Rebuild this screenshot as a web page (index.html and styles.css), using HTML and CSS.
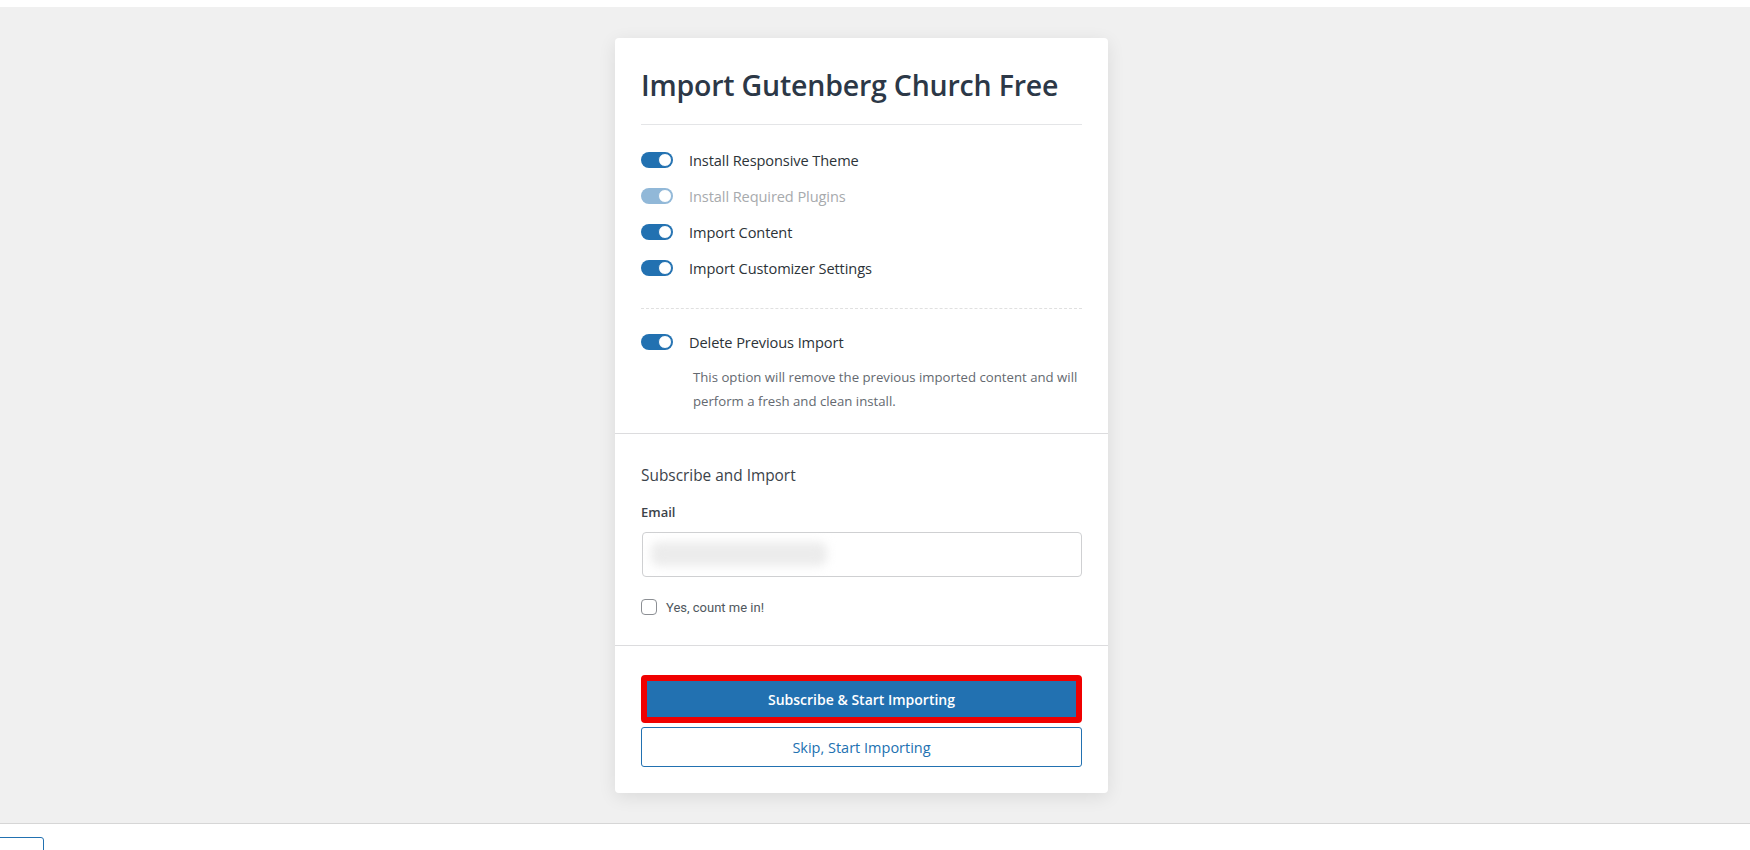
FILE: index.html
```html
<!DOCTYPE html>
<html lang="en">
<head>
<meta charset="utf-8">
<title>Import Gutenberg Church Free</title>
<link rel="stylesheet" href="styles.css">
</head>
<body>
<div class="topbar"></div>
<main class="stage">
  <div class="card">
    <section class="sec sec-options">
      <h1 class="title">Import Gutenberg Church Free</h1>
      <ul class="toggles">
        <li class="row"><span class="toggle"><span class="knob"></span></span><span class="label">Install Responsive Theme</span></li>
        <li class="row disabled"><span class="toggle"><span class="knob"></span></span><span class="label">Install Required Plugins</span></li>
        <li class="row"><span class="toggle"><span class="knob"></span></span><span class="label">Import Content</span></li>
        <li class="row"><span class="toggle"><span class="knob"></span></span><span class="label">Import Customizer Settings</span></li>
      </ul>
      <div class="dashed"></div>
      <div class="row"><span class="toggle"><span class="knob"></span></span><span class="label">Delete Previous Import</span></div>
      <p class="desc">This option will remove the previous imported content and will perform a fresh and clean install.</p>
    </section>
    <section class="sec sec-subscribe">
      <h2 class="subhead">Subscribe and Import</h2>
      <div class="field-label">Email</div>
      <div class="input"><span class="blurred"></span></div>
      <label class="check"><span class="box"></span><span class="check-text">Yes, count me in!</span></label>
    </section>
    <section class="sec sec-actions">
      <button class="btn-primary" type="button">Subscribe &amp; Start Importing</button>
      <button class="btn-secondary" type="button">Skip, Start Importing</button>
    </section>
  </div>
</main>
<footer class="footer"><span class="footer-btn"></span></footer>
</body>
</html>
```

FILE: styles.css
```css
* { box-sizing: border-box; }
html, body { margin: 0; padding: 0; }
body {
  background: #f0f0f0;
  font-family: "Open Sans", "Noto Sans", sans-serif;
  color: #2c3338;
  height: 850px;
  overflow: hidden;
}
.topbar { height: 7px; background: #ffffff; }
.stage {
  height: 816px;
  display: flex;
  justify-content: center;
  align-items: flex-start;
  padding: 31px 27px 0 0;
}
.card {
  width: 493px;
  background: #ffffff;
  border-radius: 4px;
  box-shadow: 0 4px 18px rgba(0, 0, 0, 0.09);
}
.sec { padding: 0 26px; }
.sec + .sec { border-top: 1px solid #dcdcde; }

.sec-options { padding-top: 27px; padding-bottom: 20px; }
.title {
  margin: 0;
  font-size: 28.5px;
  font-weight: 600;
  line-height: 40px;
  color: #2c3847;
  letter-spacing: -0.2px;
  padding-bottom: 19px;
  border-bottom: 1px solid #e4e5e7;
}
.toggles { list-style: none; margin: 17px 0 0; padding: 0; }
.row {
  height: 36px;
  display: flex;
  align-items: center;
}
.toggle {
  width: 32px;
  height: 16px;
  border-radius: 8px;
  background: #2271b1;
  display: flex;
  align-items: center;
  justify-content: flex-end;
  padding-right: 1px;
  flex: none;
}
.knob {
  width: 14px;
  height: 14px;
  border-radius: 50%;
  background: #ffffff;
  border: 1px solid #2271b1;
}
.label {
  margin-left: 16px;
  font-size: 14.6px;
  font-weight: 500;
  color: #2c3338;
  letter-spacing: -0.1px;
}
.row.disabled .toggle { background: #91b8d8; }
.row.disabled .knob { border-color: #91b8d8; }
.row.disabled .label { color: #a7aaad; }

.dashed {
  margin: 22px 0 15px;
  border-top: 1px dashed #e0e0e0;
}
.desc {
  margin: 6px 0 0 52px;
  font-size: 13.2px;
  line-height: 23.5px;
  color: #646970;
}

.sec-subscribe { padding-top: 31px; padding-bottom: 30px; }
.subhead {
  margin: 0;
  font-size: 15.4px;
  font-weight: 500;
  line-height: 22px;
  color: #3c434a;
}
.field-label {
  margin-top: 15px;
  font-size: 13px;
  font-weight: 600;
  line-height: 20px;
  color: #3c434a;
}
.input {
  margin-top: 10px;
  margin-left: 1px;
  height: 45px;
  border: 1px solid #cfd0d2;
  border-radius: 4px;
  padding: 9px 0 0 8px;
}
.blurred {
  display: block;
  width: 176px;
  height: 24px;
  background: #ececec;
  border-radius: 8px;
  filter: blur(5px);
}
.check {
  margin-top: 22px;
  display: flex;
  align-items: center;
  height: 16px;
}
.box {
  width: 16px;
  height: 16px;
  border: 1px solid #8c8f94;
  border-radius: 4px;
  background: #ffffff;
  flex: none;
}
.check-text {
  margin-left: 9px;
  font-family: Roboto, "Open Sans", sans-serif;
  font-size: 13px;
  color: #50575e;
}

.sec-actions {
  padding-top: 29px;
  padding-bottom: 26px;
  display: flex;
  flex-direction: column;
  gap: 4px;
}
.btn-primary, .btn-secondary {
  font-family: "Open Sans", "Noto Sans", sans-serif;
  width: 100%;
  cursor: pointer;
}
.btn-primary {
  height: 48px;
  border: 6px solid #f00000;
  border-radius: 4px;
  background: #2271b1;
  color: #ffffff;
  font-size: 14px;
  font-weight: 600;
}
.btn-secondary {
  height: 40px;
  border: 1px solid #2271b1;
  border-radius: 3px;
  background: #ffffff;
  color: #2271b1;
  font-size: 14.5px;
  font-weight: 500;
}

.footer {
  height: 27px;
  background: #ffffff;
  border-top: 1px solid #d6d6d6;
  padding-top: 13px;
  overflow: hidden;
}
.footer-btn {
  display: block;
  margin-left: -10px;
  width: 54px;
  height: 30px;
  border: 1px solid #2271b1;
  border-radius: 3px;
}
```
